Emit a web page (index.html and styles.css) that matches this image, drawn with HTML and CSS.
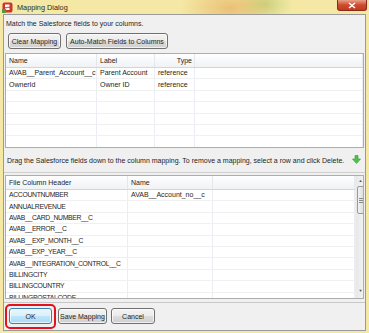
FILE: index.html
```html
<!DOCTYPE html>
<html lang="en">
<head>
    <meta charset="UTF-8">
    <meta name="viewport" content="width=device-width, initial-scale=1.0">
    <title>Mapping Dialog</title>
    <link rel="stylesheet" href="styles.css">
</head>
<body>
    <div class="window">
        <!-- Title bar -->
        <div class="titlebar">
            <svg class="app-icon" width="11" height="11" viewBox="0 0 11 11">
                <rect x="0.5" y="0.5" width="10" height="10" rx="2" fill="#c8362c"/>
                <path d="M3 2.5h4.5v2.2H5.2v1h2.3v2.2H3V6.2h2.3v-1H3z" fill="#fff"/>
                <rect x="0" y="7" width="4" height="4" fill="#4f9a3a"/>
            </svg>
            <span class="title">Mapping Dialog</span>
            <div class="close-btn">
                <svg width="8" height="7" viewBox="0 0 8 7">
                    <path d="M1 1l6 5M7 1L1 6" stroke="#fff" stroke-width="1.6"/>
                </svg>
            </div>
        </div>

        <div class="dialog">
            <div class="intro">Match the Salesforce fields to your columns.</div>

            <div class="toolbar">
                <button class="btn btn-clear">Clear Mapping</button>
                <button class="btn btn-auto">Auto-Match Fields to Columns</button>
            </div>

            <!-- Salesforce fields -->
            <div class="grid top-grid">
                <table>
                    <thead>
                        <tr>
                            <th class="col-name">Name</th>
                            <th class="col-label">Label</th>
                            <th class="col-type">Type</th>
                            <th></th>
                        </tr>
                    </thead>
                    <tbody>
                        <tr><td>AVAB__Parent_Account__c</td><td>Parent Account</td><td>reference</td><td></td></tr>
                        <tr><td>OwnerId</td><td>Owner ID</td><td>reference</td><td></td></tr>
                        <tr><td></td><td></td><td></td><td></td></tr>
                        <tr><td></td><td></td><td></td><td></td></tr>
                        <tr><td></td><td></td><td></td><td></td></tr>
                        <tr><td></td><td></td><td></td><td></td></tr>
                        <tr><td></td><td></td><td></td><td></td></tr>
                    </tbody>
                </table>
            </div>

            <div class="hint">
                <span>Drag the Salesforce fields down to the column mapping. To remove a mapping, select a row and click Delete.</span>
                <svg class="arrow-icon" width="9" height="9" viewBox="0 0 9 9">
                    <path d="M3 0.5h3v3.5h2.5L4.5 8.5 0.5 4H3z" fill="#4cc44a" stroke="#2f9a2e" stroke-width="0.6"/>
                </svg>
            </div>

            <!-- Column mapping -->
            <div class="lower">
                <div class="grid bottom-grid">
                    <table>
                        <thead>
                            <tr>
                                <th class="col-file">File Column Header</th>
                                <th class="col-map">Name</th>
                                <th></th>
                            </tr>
                        </thead>
                        <tbody>
                            <tr><td class="caps">ACCOUNTNUMBER</td><td>AVAB__Account_no__c</td><td></td></tr>
                            <tr><td class="caps">ANNUALREVENUE</td><td></td><td></td></tr>
                            <tr><td class="caps">AVAB__CARD_NUMBER__C</td><td></td><td></td></tr>
                            <tr><td class="caps">AVAB__ERROR__C</td><td></td><td></td></tr>
                            <tr><td class="caps">AVAB__EXP_MONTH__C</td><td></td><td></td></tr>
                            <tr><td class="caps">AVAB__EXP_YEAR__C</td><td></td><td></td></tr>
                            <tr><td class="caps">AVAB__INTEGRATION_CONTROL__C</td><td></td><td></td></tr>
                            <tr><td class="caps">BILLINGCITY</td><td></td><td></td></tr>
                            <tr><td class="caps">BILLINGCOUNTRY</td><td></td><td></td></tr>
                            <tr><td class="caps">BILLINGPOSTALCODE</td><td></td><td></td></tr>
                        </tbody>
                    </table>
                    <div class="scrollbar">
                        <span class="scroll-up">&#9650;</span>
                        <div class="scroll-thumb"><span class="grip"></span></div>
                        <span class="scroll-down">&#9660;</span>
                    </div>
                </div>
            </div>

            <div class="footer">
                <span class="highlight"><button class="btn btn-ok">OK</button></span>
                <button class="btn btn-save">Save Mapping</button>
                <button class="btn btn-cancel">Cancel</button>
            </div>
        </div>
    </div>
</body>
</html>
```

FILE: styles.css
```css
body {
    margin: 0;
    width: 369px;
    height: 333px;
    overflow: hidden;
    font-family: 'Liberation Sans', Arial, sans-serif;
    font-size: 7px;
    color: #1e1e1e;
    background:
        radial-gradient(ellipse 70px 40px at 230px 8px, rgba(226, 160, 80, 0.55), transparent 70%),
        radial-gradient(ellipse 40px 25px at 265px 4px, rgba(150, 190, 90, 0.45), transparent 70%),
        #f4e8a4;
}

.window {
    display: flex;
    flex-direction: column;
    height: 331px;
}

/* Title bar */
.titlebar {
    display: flex;
    align-items: center;
    height: 14px;
    padding-left: 2px;
}

.app-icon {
    margin-right: 4px;
}

.title {
    font-size: 7.3px;
    color: #2a2a2a;
}

.close-btn {
    display: flex;
    align-items: center;
    justify-content: center;
    margin-left: auto;
    align-self: flex-start;
    width: 28px;
    height: 10px;
    margin-right: 2px;
    border: 1px solid #8a2a1c;
    border-top: none;
    border-radius: 0 0 3px 3px;
    background: linear-gradient(#e8a08a, #cf4b2e 50%, #c23a1e);
}

/* Dialog body */
.dialog {
    margin-left: 3px;
    width: 363px;
    height: 317px;
    box-sizing: border-box;
    border: 1px solid #9a9a9a;
    background-color: #f0f0f0;
    display: flex;
    flex-direction: column;
}

.intro {
    padding: 3px 0 0 2px;
    height: 15px;
    line-height: 12px;
    box-sizing: border-box;
}

.toolbar {
    display: flex;
    gap: 5px;
    margin: 3px 0 0 4px;
}

.btn {
    height: 16px;
    padding: 0;
    font-family: 'Liberation Sans', Arial, sans-serif;
    font-size: 7px;
    color: #1e1e1e;
    border: 1px solid #707070;
    border-radius: 3px;
    background: linear-gradient(#f3f3f3, #ebebeb 50%, #dddddd 50%, #cfcfcf);
    box-shadow: inset 0 0 0 1px rgba(255, 255, 255, 0.7);
}

.btn-clear { width: 53px; }
.btn-auto { width: 102px; }
.btn-ok {
    width: 43px;
    border-color: #3c7fb1;
    background: linear-gradient(#eaf6fd, #d9f0fc 50%, #bee6fd 50%, #a7d9f5);
}
.btn-save { width: 49px; }
.btn-cancel { width: 44px; }

/* Grids */
.grid {
    background-color: #fff;
    border: 1px solid #adadad;
    box-sizing: border-box;
    overflow: hidden;
}

.grid table {
    border-collapse: collapse;
    table-layout: fixed;
    width: 100%;
}

.grid th {
    height: 13px;
    padding: 0 0 0 3px;
    font-weight: normal;
    text-align: left;
    background: linear-gradient(#ffffff, #f7f8fa 50%, #f1f2f4);
    border-bottom: 1px solid #d5d5d5;
    border-right: 1px solid #e3e8ee;
    white-space: nowrap;
    overflow: hidden;
}

.grid td {
    height: 10.4px;
    padding: 0 0 0 3px;
    border-bottom: 1px solid #f0f0f0;
    border-right: 1px solid #eaeef4;
    white-space: nowrap;
    overflow: hidden;
    line-height: 10px;
}

.grid td.caps {
    font-size: 6.8px;
    letter-spacing: -0.3px;
}

.top-grid {
    margin: 4px 0 0 1px;
    width: 359px;
    height: 95px;
}

.col-name { width: 87px; }
.col-label { width: 54px; }
.col-type { width: 34px; text-align: right !important; padding-right: 2px !important; }

.hint {
    display: flex;
    align-items: center;
    justify-content: space-between;
    height: 24px;
    padding: 0 4px 0 3px;
    box-sizing: border-box;
}

.arrow-icon {
    margin-top: -1px;
}

.lower {
    border-top: 1px solid #cfcfcf;
    padding: 2px 0 0 1px;
}

.bottom-grid {
    display: flex;
    width: 359px;
    height: 124px;
}

.bottom-grid table {
    width: 349px;
    flex: none;
    align-self: flex-start;
}

.bottom-grid th {
    height: 13px;
}

.col-file { width: 118px; }
.col-map { width: 81px; }

.scrollbar {
    flex: none;
    width: 10px;
    display: flex;
    flex-direction: column;
    align-items: center;
    background: linear-gradient(90deg, #e8e8e8, #f4f4f4);
    border-left: 1px solid #ececec;
    box-sizing: border-box;
}

.scroll-up, .scroll-down {
    font-size: 4px;
    color: #4d4d4d;
    height: 10px;
    line-height: 10px;
}

.scroll-down {
    margin-top: auto;
    margin-bottom: 2px;
}

.scroll-thumb {
    width: 8px;
    height: 28px;
    box-sizing: border-box;
    border: 1px solid #9a9a9a;
    border-radius: 2px;
    background: linear-gradient(90deg, #f2f2f2, #dcdcdc);
    display: flex;
    align-items: center;
    justify-content: center;
}

.grip {
    width: 4px;
    height: 5px;
    background: repeating-linear-gradient(#8a8a8a 0 1px, transparent 1px 2px);
}

.footer {
    display: flex;
    align-items: flex-start;
    margin-top: 3px;
    padding: 1px 0 0 1px;
    border-top: 1px solid #c8c8c8;
    gap: 2px;
}

.highlight {
    display: inline-flex;
    padding: 2px 2px 3px 2px;
    border: 2px solid #e0141e;
    border-radius: 5px;
}

.btn-save {
    margin-top: 4px;
}

.btn-cancel {
    margin-top: 4px;
    margin-left: 2px;
}
```
